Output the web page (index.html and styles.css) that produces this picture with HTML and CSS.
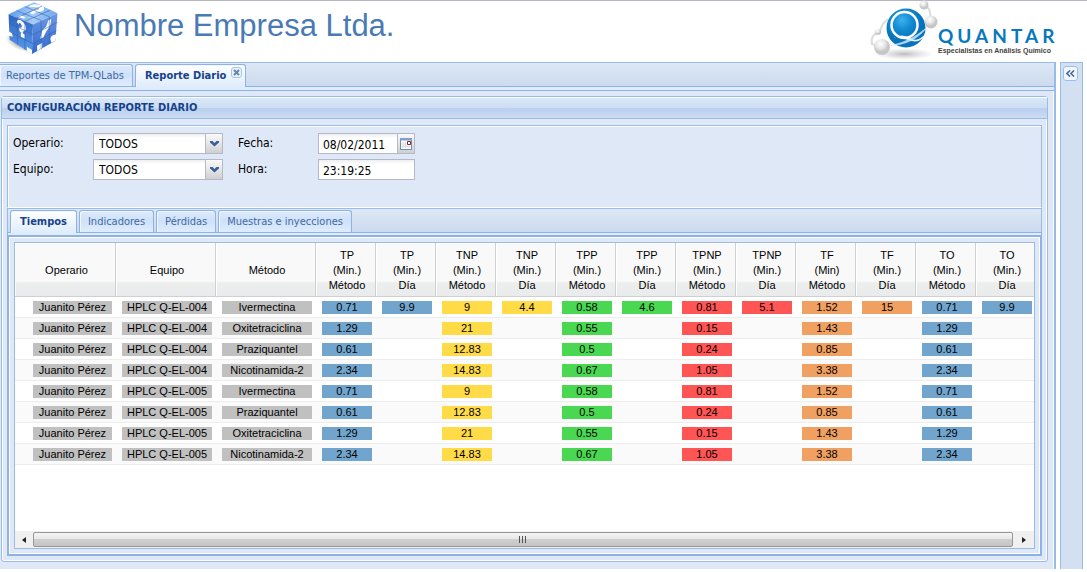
FILE: index.html
```html
<!DOCTYPE html>
<html lang="es">
<head>
<meta charset="utf-8">
<title>Reporte Diario</title>
<link rel="stylesheet" href="styles.css">
</head>
<body>
<header class="header">
  <svg class="cube" viewBox="2 0 52 53" aria-hidden="true">
    <defs>
      <linearGradient id="cubeTop" x1="0" y1="0" x2="1" y2="0"><stop offset="0" stop-color="#5c98e6"/><stop offset=".5" stop-color="#a5cdfa"/><stop offset="1" stop-color="#6ea6ec"/></linearGradient>
      <linearGradient id="cubeLeft" x1="0" y1="0" x2="0" y2="1"><stop offset="0" stop-color="#2c62bd"/><stop offset="1" stop-color="#5b9df0"/></linearGradient>
      <linearGradient id="cubeRight" x1="0" y1="0" x2="0" y2="1"><stop offset="0" stop-color="#6d9ae4"/><stop offset="1" stop-color="#3268cc"/></linearGradient>
      <radialGradient id="cubeShade"><stop offset="0" stop-color="#555" stop-opacity=".8"/><stop offset="1" stop-color="#777" stop-opacity="0"/></radialGradient>
    </defs>
    <ellipse cx="17" cy="41" rx="17" ry="8" transform="rotate(20 17 41)" fill="url(#cubeShade)"/>
    <path d="M4 13 29 1 52 12 28 23Z" fill="url(#cubeTop)"/>
    <path d="M4 13 28 23 27 52 5 38Z" fill="url(#cubeLeft)"/>
    <path d="M28 23 52 12 50 39 27 52Z" fill="url(#cubeRight)"/>
    <path d="M24 6q1-3 7-2.500q8 .5 8 4q0 3-8 3.500l-3 2-3-1 3-3q6 0 6-1.500t-5-1.500zM16 14l5 2-2 1.500-6-2zM12 21q0-4 4-2 5 3 5 8 0 3-3 3l0 2-3-2-1-4q3 1 3-1 0-3-3-4v2zM16 31l4 2v4l-4-2zM43 19l3-1-1 6-4 6-3 6-3 1 2-8 4-4zM45 37q1-4 6-4l-1 6-4 2zM32 44l5-3v5l-5 3zM4 30q4 0 4 5l-4-1zM22 45l5 3v4l-5-3z" fill="#fff"/>
    <path d="M12 16.500l1 26.500M20 20v28M36 19v28M44 15.500v27M12 16.500 37 5M20 20 45 9M12 9.500 36 19M20 5.500 44 15.500M4.500 21.500 28 33l24-12M5 30l23 12 23-13" fill="none" stroke="#315fa8" stroke-width=".7" stroke-opacity=".75"/>
  </svg>
  <h1 class="company">Nombre Empresa Ltda.</h1>
  <div class="brand">
    <svg class="molecule" viewBox="0 0 70 58" aria-hidden="true">
      <defs>
        <radialGradient id="ball" cx=".4" cy=".3"><stop offset="0" stop-color="#3fb0ee"/><stop offset=".5" stop-color="#118bd2"/><stop offset="1" stop-color="#0872bd"/></radialGradient>
        <radialGradient id="atom" cx=".4" cy=".3"><stop offset="0" stop-color="#fff"/><stop offset=".6" stop-color="#e6e6e6"/><stop offset="1" stop-color="#c6c6c6"/></radialGradient>
        <radialGradient id="floor"><stop offset="0" stop-color="#999" stop-opacity=".65"/><stop offset="1" stop-color="#bbb" stop-opacity="0"/></radialGradient>
      </defs>
      <ellipse cx="36" cy="53" rx="30" ry="6" fill="url(#floor)"/>
      <path d="M11 31Q2 34 4 43L12 46M12 31Q13 23 20 18M55 4Q64 5 62 21" fill="none" stroke="#ddd" stroke-width="2"/>
      <circle cx="38" cy="27" r="19.500" fill="url(#ball)"/>
      <ellipse cx="36.500" cy="24" rx="13" ry="13" fill="none" stroke="#fff" stroke-width="2.500"/>
      <path d="M26 37q8-5 16 0t16-5q-5 12-18 7t-14-2" fill="#fff" fill-opacity=".9"/>
      <path d="M17 45Q42 42 61 24 46 46 17 45" fill="#d4edfb" fill-opacity=".8"/>
      <circle cx="56" cy="4" r="4.500" fill="url(#atom)"/>
      <circle cx="63" cy="21" r="6.500" fill="url(#atom)"/>
      <circle cx="10" cy="31" r="3" fill="url(#atom)"/>
      <circle cx="14" cy="46" r="8" fill="url(#atom)"/>
    </svg>
    <div class="brand-text">
      <div class="brand-name">QUANTAR</div>
      <div class="brand-tag">Especialistas en Análisis Químico</div>
    </div>
  </div>
</header>

<div class="workspace">
  <main class="main">
    <nav class="tabs tabs-main">
      <button class="tab" type="button">Reportes de TPM-QLabs</button>
      <div class="tab active closable">
        <button class="tab-label" type="button">Reporte Diario</button>
        <button class="tab-close" type="button" aria-label="Cerrar"><svg viewBox="0 0 9 9"><path d="M2 2l5 5m0-5l-5 5" stroke="#6685b0" stroke-width="2" fill="none"/></svg></button>
      </div>
    </nav>
    <div class="tab-gap"></div>
    <section class="main-body">
      <div class="panel">
        <h2 class="panel-title">CONFIGURACIÓN REPORTE DIARIO</h2>
        <div class="panel-body">
          <form class="filters">
            <label for="operario">Operario:</label>
            <div class="field combo">
              <select id="operario"><option>TODOS</option></select>
              <span class="trigger"><svg viewBox="0 0 9 6"><path d="M0 0h2.500l2 2 2-2H9v1.500L4.500 5.500 0 1.500z" fill="#3a5f9c"/></svg></span>
            </div>
            <label for="fecha">Fecha:</label>
            <div class="field date">
              <input id="fecha" type="text" value="08/02/2011">
              <button class="trigger" type="button" aria-label="Elegir fecha"><svg class="calendar" viewBox="0 0 12 12"><path d="M.5 .5h11v11H.5z" fill="#fff" stroke="#6a8cba"/><path d="M0 0h12v2.500H0z" fill="#7f9fcd"/><path d="M3 4v6M5.500 4v6M8 8v2M1.500 6h5M1.500 8.500h9" stroke="#dcdcdc"/><path d="M7.500 3.500h3v3h-3z" fill="#fff" stroke="#9b1c1c"/></svg></button>
            </div>
            <label for="equipo">Equipo:</label>
            <div class="field combo">
              <select id="equipo"><option>TODOS</option></select>
              <span class="trigger"><svg viewBox="0 0 9 6"><path d="M0 0h2.500l2 2 2-2H9v1.500L4.500 5.500 0 1.500z" fill="#3a5f9c"/></svg></span>
            </div>
            <label for="hora">Hora:</label>
            <div class="field time"><input id="hora" type="text" value="23:19:25"></div>
          </form>
          <nav class="tabs tabs-inner">
            <button class="tab active" type="button">Tiempos</button>
            <button class="tab" type="button">Indicadores</button>
            <button class="tab" type="button">Pérdidas</button>
            <button class="tab" type="button">Muestras e inyecciones</button>
          </nav>
          <div class="tab-gap inner-gap"></div>
          <div class="tab-body">
            <div class="grid">
              <div class="grid-view">
                <table>
                  <colgroup><col class="col-first"><col class="col-wide" span="2"><col class="col-num" span="12"></colgroup>
                  <thead>
                    <tr>
                      <th>Operario</th><th>Equipo</th><th>Método</th>
                      <th>TP<br>(Min.)<br>Método</th><th>TP<br>(Min.)<br>Día</th>
                      <th>TNP<br>(Min.)<br>Método</th><th>TNP<br>(Min.)<br>Día</th>
                      <th>TPP<br>(Min.)<br>Método</th><th>TPP<br>(Min.)<br>Día</th>
                      <th>TPNP<br>(Min.)<br>Método</th><th>TPNP<br>(Min.)<br>Día</th>
                      <th>TF<br>(Min)<br>Método</th><th>TF<br>(Min.)<br>Día</th>
                      <th>TO<br>(Min.)<br>Método</th><th>TO<br>(Min.)<br>Día</th>
                    </tr>
                  </thead>
                  <tbody id="rows"></tbody>
                </table>
              </div>
              <div class="scrollbar" aria-hidden="true">
                <span class="arrow"><svg viewBox="0 0 4 6"><path d="M4 0v6L0 3z" fill="#222"/></svg></span>
                <span class="thumb"><svg viewBox="0 0 8 7"><path d="M.5 0v7M3.500 0v7M6.500 0v7" stroke="#555"/></svg></span>
                <span class="arrow arrow-end"><svg viewBox="0 0 4 6"><path d="M0 0v6l4-3z" fill="#222"/></svg></span>
              </div>
            </div>
          </div>
        </div>
      </div>
    </section>
  </main>
  <aside class="side">
    <button class="expand" type="button" aria-label="Expandir"><svg viewBox="0 0 9 7"><path d="M4 .5l-3 3 3 3M8 .5l-3 3 3 3" fill="none" stroke="#44699c" stroke-width="1.600"/></svg></button>
  </aside>
</div>
<script src="grid.js"></script>
</body>
</html>
```

FILE: styles.css
```css
* { box-sizing: border-box; }

body {
  margin: 0;
  height: 100vh;
  min-height: 480px;
  padding-bottom: 3px;
  display: flex;
  flex-direction: column;
  background: #fff;
  color: #000;
  font: 11px/15px "DejaVu Sans Condensed", "DejaVu Sans", Tahoma, sans-serif;
}

button, input, select {
  margin: 0;
  padding: 0;
  border: 0;
  background: none;
  color: inherit;
  font: inherit;
}

svg { display: block; }

/* Header */
.header {
  flex: none;
  display: flex;
  height: 62px;
  padding: 0 28px 0 5px;
  border-top: 1px solid #b7b7c3;
}

.cube { width: 56px; height: 54px; }

.company {
  flex: 1;
  margin: 0 0 0 13px;
  color: #4a7ab5;
  font: 31px/50px "Liberation Sans", Arial, sans-serif;
}

.brand { display: flex; }
.molecule { width: 70px; height: 58px; overflow: visible; }

.brand-text {
  width: 121px;
  padding-top: 24px;
  white-space: nowrap;
}

.brand-name {
  color: #0878bd;
  font: bold 19px/22px Lato, sans-serif;
  letter-spacing: 4px;
}

.brand-tag {
  color: #444;
  font: bold 7px/8px "Liberation Sans", Arial, sans-serif;
}

/* Workspace */
.workspace {
  flex: 1;
  min-height: 0;
  display: flex;
  gap: 4px;
  padding-right: 4px;
}

.main {
  flex: 1;
  min-width: 0;
  display: flex;
  flex-direction: column;
  border: solid #99bbe8;
  border-width: 1px 2px 0 0;
}

.side {
  width: 23px;
  padding: 3px 2px;
  border: solid #99bbe8;
  border-width: 1px 1px 0;
  background: #d2e0f2;
}

.expand {
  display: grid;
  place-items: center;
  width: 15px;
  height: 15px;
  border: 1px solid #98c0f4;
  border-radius: 3px;
  background: #f1f6fd;
}

.expand svg { width: 9px; height: 7px; }

/* Tab strips */
.tabs {
  flex: none;
  display: flex;
  align-items: flex-end;
  gap: 2px;
  height: 23px;
  background: linear-gradient(#dde8f5, #cbdaee);
}

.tab {
  height: 22px;
  padding: 0 9px;
  border: 1px solid #8db2e3;
  border-bottom: 0;
  border-radius: 3px 3px 0 0;
  background: linear-gradient(#deeafa, #cfe1f9 45%, #deecfd);
  box-shadow: inset 1px 1px #f2f7fe;
  color: #416aa3;
  line-height: 20px;
  white-space: nowrap;
}

.tab.active {
  position: relative;
  z-index: 1;
  height: 23px;
  margin-bottom: -1px;
  background: linear-gradient(#fff, #deecfd);
  color: #15428b;
  font-weight: bold;
}

.tabs-main .tab:first-child {
  padding: 0 8px 0 6px;
  border-left: 0;
  border-radius: 0 3px 0 0;
}

.closable {
  display: flex;
  gap: 5px;
  padding-right: 3px;
}

.tab-close {
  width: 11px;
  height: 11px;
  margin-top: 2px;
  border: 1px solid #a9c4e8;
  border-radius: 3px;
  background: #e9f2fd;
}

.tab-close svg { width: 9px; height: 9px; }

.tab-gap {
  flex: none;
  height: 5px;
  border: solid #8db2e3;
  border-width: 1px 0;
  background: #deecfd;
}

.main-body {
  flex: 1;
  min-height: 0;
  display: flex;
  padding: 5px 5px 7px 1px;
  border-right: 1px solid #fff;
  background: #dfe8f6;
}

/* Report panel */
.panel {
  flex: 1;
  min-width: 0;
  display: flex;
  flex-direction: column;
  border: 1px solid #99bbe8;
  border-radius: 3px;
  box-shadow: inset 0 0 0 1px #fff;
}

.panel-title {
  flex: none;
  height: 22px;
  margin: 0;
  padding-left: 5px;
  border-bottom: 1px solid #99bbe8;
  background: linear-gradient(#fff 1px, #dae7f6 1px, #cddef3 11px, #b8cfee 11px, #ccdcf3);
  color: #15428b;
  font-size: 11px;
  line-height: 22px;
}

.panel-body {
  flex: 1;
  min-height: 0;
  display: flex;
  flex-direction: column;
  padding: 6px 5px 5px;
}

.filters {
  flex: none;
  display: grid;
  grid-template-columns: 80px 130px 95px 97px;
  grid-auto-rows: 21px;
  align-content: start;
  align-items: center;
  gap: 5px 0;
  height: 83px;
  padding: 7px 5px;
  border: 1px solid #99bbe8;
  border-bottom-color: #fff;
  box-shadow: inset 1px 1px #fff;
  font-size: 12px;
}

.filters label:nth-of-type(even) { padding-left: 15px; }

.field { display: flex; height: 21px; }

.field select,
.field input {
  flex: 1;
  min-width: 0;
  height: 21px;
  padding: 2px 5px 0;
  border: 1px solid #b5b8c8;
  border-radius: 0;
  background: linear-gradient(#eee, #fff 4px);
  appearance: none;
}

.field input { padding: 2px 4px 0; }

.trigger {
  display: grid;
  place-items: center;
  width: 17px;
  height: 21px;
  border: solid #b5b8c8;
  border-width: 1px 1px 1px 0;
  background: linear-gradient(#fafafa, #e6e6e6 50%, #cfcfcf);
}

.trigger svg { width: 9px; height: 6px; }
.trigger .calendar { width: 12px; height: 12px; }

.tabs-inner {
  height: 24px;
  padding: 0 2px;
  border: solid #99bbe8;
  border-width: 1px 1px 0;
}

.tabs-inner .tab { padding: 0 8px; }
.tabs-inner .tab.active { padding: 0 9px; }

.inner-gap {
  border-width: 1px 1px 2px;
}

.tab-body {
  flex: 1;
  min-height: 0;
  display: flex;
  padding: 5px;
  border: solid #8db2e3;
  border-width: 0 2px 2px;
  box-shadow: inset 0 0 0 1px #fff;
}

/* Data grid */
.grid {
  flex: 1;
  min-width: 0;
  display: flex;
  flex-direction: column;
  border: 1px solid #99bbe8;
  background: #fff;
  font-family: "Liberation Sans", Arial, sans-serif;
}

.grid-view {
  flex: 1;
  min-height: 0;
  overflow: hidden;
}

table {
  width: 1021px;
  border-collapse: separate;
  border-spacing: 0;
  table-layout: fixed;
}

.col-first { width: 101px; }
.col-wide { width: 100px; }
.col-num { width: 60px; }

th {
  height: 54px;
  padding: 1px 0 0 3px;
  border: 1px solid #d0d0d0;
  border-width: 0 1px 1px 0;
  background: linear-gradient(#f9f9f9 38px, #eceded 40px, #eaebec);
  box-shadow: inset 1px 1px #fff;
  font-weight: normal;
  text-align: center;
}

td {
  height: 21px;
  padding: 0 4px 0 6px;
  border-bottom: 1px solid #ededed;
  line-height: 13px;
  text-align: center;
}

td:first-child { padding-left: 18px; }
tbody tr:nth-child(even) td { background: #fafafa; }

.cell { display: block; height: 13px; }
.gray { background: #c0c0c0; }
.blue { background: #72a5cd; }
.yellow { background: #ffdb48; }
.green { background: #4ad852; }
.red { background: #ff5554; }
.orange { background: #f0a060; }

.scrollbar {
  flex: none;
  display: flex;
  height: 17px;
  padding: 1px 0;
  background: #f0f0f0;
}

.arrow {
  display: grid;
  place-items: center;
  width: 18px;
}

.arrow-end { width: 21px; }
.arrow svg { width: 4px; height: 6px; }

.thumb {
  flex: 1;
  display: grid;
  place-items: center;
  border: 1px solid #979797;
  border-radius: 2px;
  background: linear-gradient(#f5f5f5, #e6e6e6 50%, #cfcfcf 50%, #c4c4c4);
}

.thumb svg { width: 8px; height: 7px; }
```

FILE: grid.js
```js
const metodos = {
  "Ivermectina": ["0.71", "9", "0.58", "0.81", "1.52", "0.71"],
  "Oxitetraciclina": ["1.29", "21", "0.55", "0.15", "1.43", "1.29"],
  "Praziquantel": ["0.61", "12.83", "0.5", "0.24", "0.85", "0.61"],
  "Nicotinamida-2": ["2.34", "14.83", "0.67", "1.05", "3.38", "2.34"]
};
const dia = ["9.9", "4.4", "4.6", "5.1", "15", "9.9"];
const colores = ["blue", "yellow", "green", "red", "orange", "blue"];
const filas = [
  ["HPLC Q-EL-004", "Ivermectina"],
  ["HPLC Q-EL-004", "Oxitetraciclina"],
  ["HPLC Q-EL-004", "Praziquantel"],
  ["HPLC Q-EL-004", "Nicotinamida-2"],
  ["HPLC Q-EL-005", "Ivermectina"],
  ["HPLC Q-EL-005", "Praziquantel"],
  ["HPLC Q-EL-005", "Oxitetraciclina"],
  ["HPLC Q-EL-005", "Nicotinamida-2"]
];
const celda = (texto, color) =>
  texto ? `<td><span class="cell ${color}">${texto}</span></td>` : "<td></td>";

document.getElementById("rows").innerHTML = filas.map(([equipo, metodo], fila) =>
  "<tr>" +
  ["Juanito Pérez", equipo, metodo].map(t => celda(t, "gray")).join("") +
  metodos[metodo].map((v, i) =>
    celda(v, colores[i]) + celda(fila === 0 ? dia[i] : "", colores[i])).join("") +
  "</tr>").join("");
```
